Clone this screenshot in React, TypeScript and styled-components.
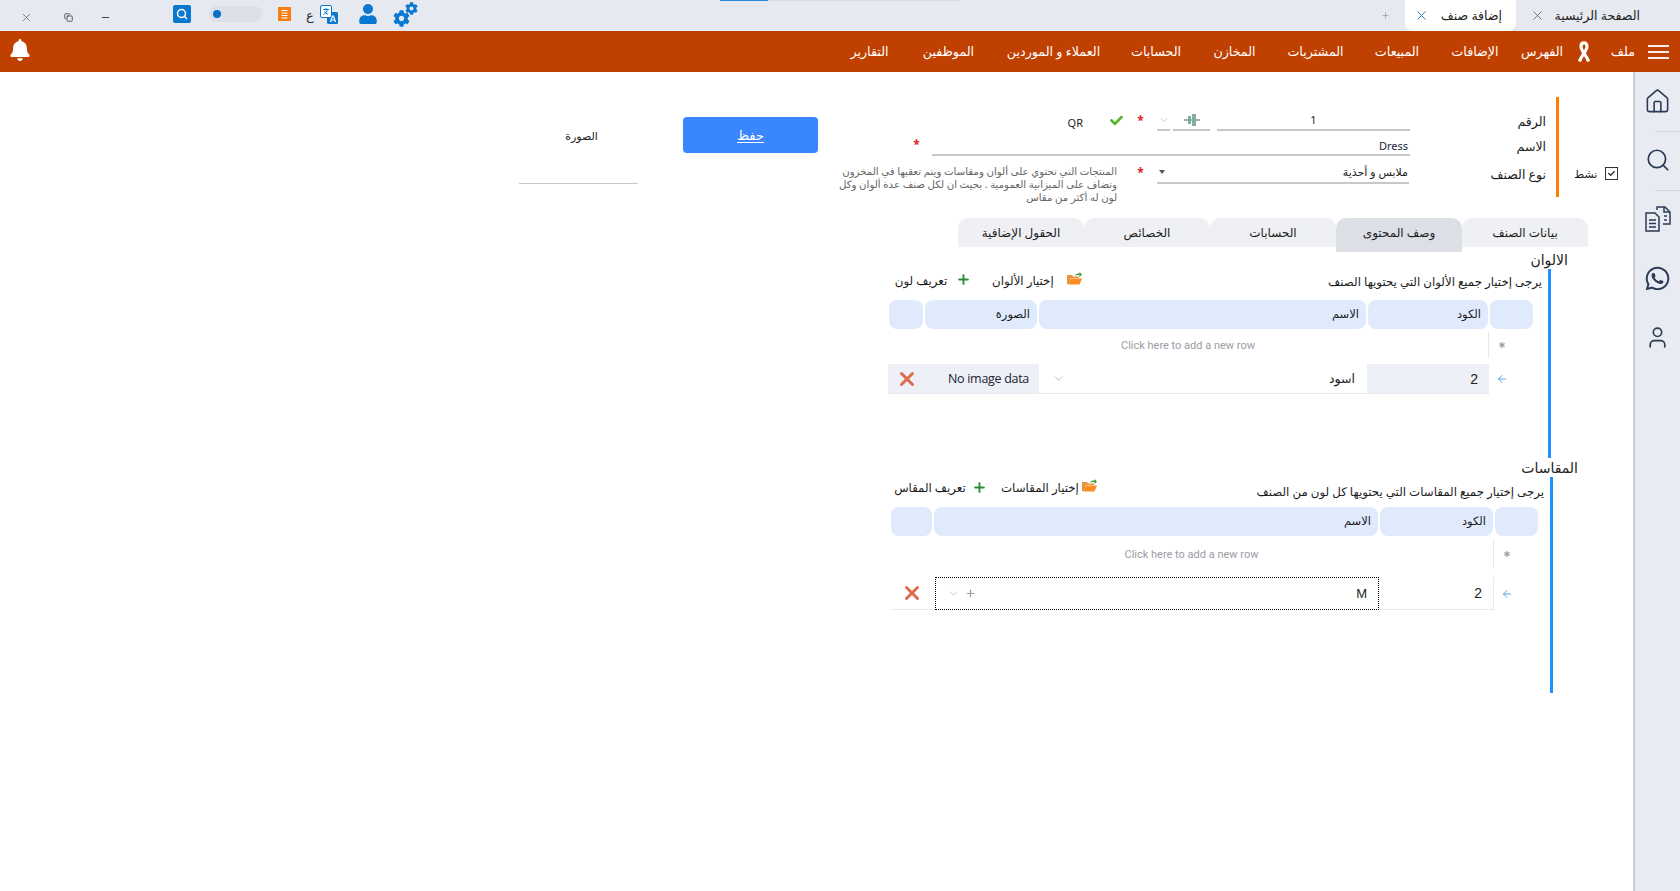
import React from "react";
import styled, { createGlobalStyle } from "styled-components";
import { ArrowLeft, Asterisk, ChevronDown, Copy, House, Minus, Plus, Search, User, X } from "lucide-react";
import { FaBell, FaCheck, FaCog, FaUser, FaWhatsapp } from "react-icons/fa";

const Global = createGlobalStyle`
  html, body { margin: 0; padding: 0; height: 100%; background: #fff; overflow: hidden; }
  #root { height: 100%; }
  * { box-sizing: border-box; }
  body { font-family: "Noto Sans", "Open Sans", "DejaVu Sans", sans-serif; color: #1c1c1c; }
`;

const Page = styled.div`display: flex; flex-direction: column; width: 1680px; height: 891px;`;

const TitleBar = styled.header`display: flex; height: 31px; background: #e6e9ef; flex: none;`;
const WindowControls = styled.div`display: grid; grid-template-columns: 42px 42px 36px; padding-left: 5px; align-items: center; color: #333; width: 125px;`;
const WinBtn = styled.span`display: flex; justify-content: center; align-items: center; padding-top: 4px;`;
const MinBtn = styled(WinBtn)`margin-left: -4px;`;
const Tools = styled.div`display: flex; align-items: center; margin-left: 48px; height: 28px;`;
const SearchTool = styled.span`display: flex; align-items: center; justify-content: center; width: 18px; height: 18px; background: #0a78d0; border-radius: 2px; color: #fff; margin-right: 18px;`;
const Toggle = styled.span`display: flex; align-items: center; width: 53px; height: 16px; background: #dce0e8; border-radius: 8px; padding-left: 4px; margin-right: 16px;`;
const ToggleDot = styled.span`width: 8px; height: 8px; border-radius: 50%; background: #0a70c4;`;
const ListTool = styled.svg`width: 13px; height: 14px; margin-right: 15px;`;
const LangLetter = styled.span`font-size: 13px; width: 9px; margin-right: 5px; color: #333; line-height: 1; padding-top: 2px;`;
const TranslateTool = styled.svg`width: 18px; height: 19px; margin-right: 20px;`;
const PersonTool = styled.span`display: flex; color: #0a78d0; margin-right: 15px; font-size: 20px;`;
const GearTool = styled.span`position: relative; display: block; width: 25px; height: 25px; color: #0a78d0;`;
const BigGear = styled.span`position: absolute; left: 0; bottom: 0; display: flex; font-size: 17px;`;
const SmallGear = styled.span`position: absolute; right: 0; top: 0; display: flex; font-size: 13px;`;
const LoadStrip = styled.div`display: flex; margin-left: 302px; width: 240px; height: 1px;`;
const LoadDone = styled.span`width: 48px; background: #2b8ae6;`;
const LoadRest = styled.span`flex: 1; background: #dcdcdc;`;
const TabStrip = styled.div`display: flex; margin-left: auto; align-items: stretch;`;
const NewTab = styled.span`display: flex; align-items: center; color: #888; margin-right: 15px;`;
const WindowTab = styled.div<{ $active?: boolean }>`
  display: flex; align-items: center; height: 31px;
  width: ${(p) => (p.$active ? 111 : 164)}px;
  padding: ${(p) => (p.$active ? "0 14px 0 9px" : "0 40px 0 14px")};
  justify-content: space-between;
  background: ${(p) => (p.$active ? "#fff" : "#e6e9ef")};
  border-radius: 0 0 8px 8px;
  font-size: 12.5px; color: #222; white-space: nowrap;
`;
const TabClose = styled.span<{ $active?: boolean }>`display: flex; color: ${(p) => (p.$active ? "#1278d0" : "#555")};`;

const MenuBar = styled.nav`display: flex; align-items: center; height: 41px; background: #bf4000; padding: 0 11px 0 9px; color: #fff; flex: none;`;
const Bell = styled.span`display: flex; font-size: 22px; margin-right: auto; padding-bottom: 3px;`;
const MenuItem = styled.span<{ $w: number }>`width: ${(p) => p.$w}px; text-align: center; font-size: 12.7px; white-space: nowrap; padding-bottom: 1px;`;
const Ribbon = styled.svg`width: 16px; height: 22px; margin: 0 18px 0 6px;`;
const FileItem = styled.span`font-size: 12.7px; margin-right: 13px; padding-bottom: 1px; width: 25px; text-align: right; white-space: nowrap;`;
const Burger = styled.span`display: flex; flex-direction: column; gap: 4px; width: 21px;`;
const BurgerLine = styled.span`height: 2px; background: #fff; opacity: .9;`;

const Body = styled.div`display: flex; flex: 1; min-height: 0;`;
const Content = styled.main`flex: 1; min-width: 0;`;
const Sidebar = styled.aside`width: 47px; flex: none; background: #e8ebf1; border-left: 2px solid #c9ccd3; color: #2b3a55; display: flex; flex-direction: column; align-items: center; padding-top: 15px;`;
const SideIcon = styled.span`display: flex; height: 28px; align-items: center; justify-content: center;`;
const SideRule = styled.span`align-self: flex-end; width: 25px; height: 1px; background: #d5d8df; margin: 16px 0 14px;`;
const SideGap = styled.span`height: 31px;`;

const TopRow = styled.section`display: flex; align-items: flex-start; padding-left: 519px; height: 112px; margin-top: 24px;`;
const PictureBlock = styled.div`width: 119px; height: 88px; padding: 32px 0 0 6px; text-align: center; font-size: 11px; border-bottom: 1px solid #c5c9d2;`;
const SaveButton = styled.button`
  margin: 21px 0 0 45px; width: 135px; height: 36px; border: 0; border-radius: 4px; background: #3a86ff;
  color: #fff; font: inherit; font-size: 13px; text-decoration: underline; text-underline-offset: 2px;
`;
const FormBlock = styled.div`margin-left: 14px; width: 714px; flex: none;`;
const FormRow = styled.div<{ $h: number; $mt?: number }>`display: grid; grid-template-columns: 578px 136px; height: ${(p) => p.$h}px; margin-top: ${(p) => p.$mt || 0}px;`;
const FieldLine = styled.div<{ $top?: boolean }>`display: flex; justify-content: flex-end; align-items: ${(p) => (p.$top ? "flex-start" : "flex-end")};`;
const Label = styled.label<{ $pt: number }>`text-align: right; font-size: 12.5px; padding-top: ${(p) => p.$pt}px; white-space: nowrap;`;
const UnderInput = styled.div<{ $w: number; $center?: boolean }>`
  width: ${(p) => p.$w}px; height: 100%; border-bottom: 2px solid #c8c8c8; display: flex; align-items: center;
  justify-content: ${(p) => (p.$center ? "center" : "flex-end")};
  font-size: 11px; padding: ${(p) => (p.$center ? "0 2px" : "5px 2px 0")}; color: #1c1c3a; white-space: nowrap;
`;
const CodeBox = styled.div`width: 37px; height: 100%; margin-right: 7px; border-bottom: 2px solid #c8c8c8; display: flex; align-items: center; justify-content: center;`;
const ChevBox = styled.div`width: 13px; height: 100%; margin-right: 3px; border-bottom: 2px solid #c8c8c8; display: flex; align-items: center; justify-content: center; color: #999;`;
const Req = styled.span<{ $gap: number; $y?: number }>`width: 9px; margin-right: ${(p) => p.$gap}px; margin-top: ${(p) => p.$y || 0}px; color: #d8202a; font-size: 12px; font-weight: 700; line-height: 1; text-align: center; align-self: center;`;
const SelectReq = styled(Req)`align-self: flex-start;`;
const GreenCheck = styled.span`display: flex; color: #58b428; font-size: 13px; margin-right: 13px; align-self: center;`;
const QR = styled.span`font-size: 11px; margin-right: 27px; align-self: center; padding-top: 3px;`;
const Description = styled.p`margin: 7px 19px 0 0; width: 285px; font-size: 10.2px; line-height: 13px; color: #666; text-align: right; direction: rtl;`;
const SelectCaret = styled.span`width: 0; height: 0; border: 3px solid transparent; border-top: 4px solid #555; border-bottom: 0; margin-right: auto;`;
const SelectBox = styled.div`width: 252px; height: 26px; border-bottom: 2px solid #c8c8c8; display: flex; align-items: center; justify-content: flex-end; font-size: 11px; padding: 3px 1px 0 2px; margin-right: 1px;`;
const OrangeBar = styled.div`margin: 1px 0 0 10px; width: 3px; height: 100px; background: #ff8000; flex: none;`;
const ActiveBlock = styled.div`margin: 70px 0 0 15px; display: flex; align-items: center; gap: 8px; font-size: 11px;`;
const CheckBox = styled.span`display: flex; align-items: center; justify-content: center; width: 13px; height: 13px; border: 1px solid #333; color: #333;`;

const TabRow = styled.div`display: flex; align-items: flex-start; padding-left: 958px; height: 32px; margin-top: 10px;`;
const FormTab = styled.div<{ $active?: boolean }>`
  width: 126px; height: ${(p) => (p.$active ? 34 : 29)}px; position: relative; z-index: 1;
  background: ${(p) => (p.$active ? "#dcdfe5" : "#eef0f3")}; border-radius: 10px 10px 0 0;
  display: flex; justify-content: center; align-items: flex-start; padding-top: 6px; font-size: 12px; white-space: nowrap;
`;

const Section = styled.section<{ $left: number; $width: number }>`margin-left: ${(p) => p.$left}px; width: ${(p) => p.$width}px;`;
const SectionTitle = styled.h3`margin: 0; height: 19px; text-align: right; font-size: 14px; font-weight: 400; line-height: 19px; color: #222; white-space: nowrap;`;
const SectionBody = styled.div<{ $h: number; $right: number }>`height: ${(p) => p.$h}px; margin-right: ${(p) => p.$right}px; border-right: 3px solid #1e90ff;`;
const Toolbar = styled.div<{ $h: number }>`display: flex; align-items: center; height: ${(p) => p.$h}px; padding: 0 6px 2px 5px; margin-bottom: 8px;`;
const Action = styled.span<{ $w: number; $ml?: number }>`width: ${(p) => p.$w}px; margin-left: ${(p) => p.$ml || 0}px; font-size: 11.8px; white-space: nowrap; text-align: center; flex: none;`;
const ActionIcon = styled.span<{ $ml: number }>`display: flex; margin-left: ${(p) => p.$ml}px; color: #2e8b2e; flex: none;`;
const Folder = styled.svg<{ $ml: number }>`width: 15px; height: 13px; margin-left: ${(p) => p.$ml}px; margin-top: -3px; flex: none;`;
const ToolbarHint = styled.span<{ $down: number }>`margin-left: auto; font-size: 11.8px; white-space: nowrap; padding-top: ${(p) => p.$down}px;`;

const HeaderRow = styled.div<{ $cols: string; $ml?: number }>`display: grid; grid-template-columns: ${(p) => p.$cols}; gap: 2px; height: 29px; margin-left: ${(p) => p.$ml || 0}px; margin-bottom: 3px;`;
const HeadCell = styled.div`background: #dfeafd; border-radius: 8px; font-size: 11.5px; text-align: right; padding: 6px 7px 0 0; white-space: nowrap;`;
const AddRow = styled.div<{ $h: number; $cols: string; $mb: number }>`display: grid; grid-template-columns: ${(p) => p.$cols}; height: ${(p) => p.$h}px; margin-bottom: ${(p) => p.$mb}px;`;
const AddHint = styled.div`display: flex; align-items: center; justify-content: center; padding-top: 1px; font-family: Roboto, sans-serif; font-size: 11px; color: #9a9ca6; border-right: 1px solid #e6e8ee;`;
const RowMark = styled.div`display: flex; align-items: center; padding-left: 8px; color: #9a9a9a;`;
const DataRow = styled.div<{ $h: number; $cols: string }>`display: grid; grid-template-columns: ${(p) => p.$cols}; height: ${(p) => p.$h}px;`;
const DataCell = styled.div<{ $shade?: boolean; $line?: boolean }>`
  display: flex; align-items: center; justify-content: space-between;
  background: ${(p) => (p.$shade ? "#edf0f7" : "transparent")};
  border-bottom: 1px solid #e9ebf0; ${(p) => p.$line && "border-right: 1px solid #e9ebf0;"}
  padding: 0 10px 0 8px; font-size: 12.5px; white-space: nowrap;
`;
const DeleteCell = styled(DataCell)`padding-left: 11px;`;
const NameCell = styled(DataCell)`padding: 0 12px 0 13px;`;
const NumberValue = styled.span`margin-left: auto; padding-right: 1px; font-family: "Liberation Sans", sans-serif; font-size: 14px; color: #222;`;
const LatinValue = styled.span`font-family: "Open Sans", sans-serif; font-size: 12.5px; letter-spacing: -.3px; color: #223;`;
const DeleteMark = styled.span`display: flex; color: #dd6b4d;`;
const FocusCell = styled.div`display: flex; align-items: center; border: 1px dotted #000; padding: 0 11px 0 11px; color: #999; gap: 5px;`;
const MValue = styled.span`margin-left: auto; font-family: "Liberation Sans", sans-serif; font-size: 13px; color: #222;`;
const ArrowMark = styled.div`display: flex; align-items: center; padding-left: 7px; color: #2a88d8;`;

const FolderIcon = ({ ml }: { ml: number }) => (
  <Folder $ml={ml} viewBox="0 0 15 13">
    <path d="M0 3h5l1 1.500h6V6H4L2 12H0z" fill="#e8943a" />
    <path d="M4 6.500h11l-2.500 6H1.500z" fill="#fb8c22" />
    <path d="M8 3.500c1-2 3-2.500 4.500-1.800V0L15 2.600 12.500 5V3.200C11 2.800 9.500 3 8 3.500z" fill="#3a9a3a" />
  </Folder>
);

const colorsHead = "34px 112px 327px 120px 43px";
const colorsRow = "151px 328px 122px 44px";
const sizesHead = "41px 444px 113px 43px";
const sizesRow = "45px 444px 115px 44px";

const menu: [string, number][] = [
  ["التقارير", 73], ["الموظفين", 85], ["العملاء و الموردين", 125], ["الحسابات", 80], ["المخازن", 77],
  ["المشتريات", 85], ["المبيعات", 78], ["الإضافات", 78], ["الفهرس", 56],
];
const tabs = ["الحقول الإضافية", "الخصائص", "الحسابات", "وصف المحتوى", "بيانات الصنف"];

export default function App() {
  return (
    <Page>
      <Global />
      <TitleBar>
        <WindowControls>
          <WinBtn><X size={13} strokeWidth={1} /></WinBtn>
          <WinBtn><Copy size={9} strokeWidth={2} /></WinBtn>
          <MinBtn><Minus size={11} strokeWidth={2} /></MinBtn>
        </WindowControls>
        <Tools>
          <SearchTool><Search size={12} strokeWidth={3} /></SearchTool>
          <Toggle><ToggleDot /></Toggle>
          <ListTool viewBox="0 0 13 14">
            <rect width="13" height="14" fill="#f57f17" />
            <path d="M3.500 3.500h6M3.500 6h6M3.500 8.500h6M3.500 11h6" stroke="#fff" strokeWidth="1" />
          </ListTool>
          <LangLetter>ع</LangLetter>
          <TranslateTool viewBox="0 0 18 19">
            <rect x="7" y="7" width="11" height="12" rx="1.500" fill="#0a78d0" />
            <rect x="0.500" y="0.500" width="11" height="12" rx="1.500" fill="#fff" stroke="#0a78d0" />
            <path d="M3 4.500h6M6 3v1.500M3.500 9.500c2-1 3.500-2.500 4-5M4.500 6c.8 1.500 2 2.800 3.500 3.500" stroke="#0a78d0" fill="none" strokeWidth="1" />
            <path d="M10.500 17l2-6h1l2 6M11.300 15h3.400" stroke="#fff" fill="none" strokeWidth="1.200" />
          </TranslateTool>
          <PersonTool><FaUser /></PersonTool>
          <GearTool>
            <BigGear><FaCog /></BigGear>
            <SmallGear><FaCog /></SmallGear>
          </GearTool>
        </Tools>
        <LoadStrip><LoadDone /><LoadRest /></LoadStrip>
        <TabStrip>
          <NewTab><Plus size={9} strokeWidth={1.5} /></NewTab>
          <WindowTab $active>
            <TabClose $active><X size={15} strokeWidth={1.5} /></TabClose>
            <span>إضافة صنف</span>
          </WindowTab>
          <WindowTab>
            <TabClose><X size={15} strokeWidth={1.2} /></TabClose>
            <span>الصفحة الرئيسية</span>
          </WindowTab>
        </TabStrip>
      </TitleBar>
      <MenuBar>
        <Bell><FaBell /></Bell>
        {menu.map(([t, w]) => <MenuItem key={t} $w={w}>{t}</MenuItem>)}
        <Ribbon viewBox="0 0 16 22">
          <path d="M3.500 20.500C5 15 11 10 11 5.500 11 3 9.700 1.800 8 1.800S5 3 5 5.500C5 10 11 15 12.500 20.500" fill="none" stroke="#fff" strokeWidth="3.200" />
        </Ribbon>
        <FileItem>ملف</FileItem>
        <Burger><BurgerLine /><BurgerLine /><BurgerLine /></Burger>
      </MenuBar>
      <Body>
        <Content>
          <TopRow>
            <PictureBlock>الصورة</PictureBlock>
            <SaveButton>حفظ</SaveButton>
            <FormBlock>
              <FormRow $h={21} $mt={14}>
                <FieldLine>
                  <QR>QR</QR>
                  <GreenCheck><FaCheck /></GreenCheck>
                  <Req $gap={12}>*</Req>
                  <ChevBox><ChevronDown size={12} strokeWidth={1} /></ChevBox>
                  <CodeBox>
                    <svg width="16" height="12" viewBox="0 0 16 12"><path d="M0 6h16" stroke="#6f9f8a" strokeWidth="1.500" /><path d="M4 2h3v8H4zM8 0h4v12H8z" fill="#7fae9a" /></svg>
                  </CodeBox>
                  <UnderInput $w={193} $center>1</UnderInput>
                </FieldLine>
                <Label $pt={3}>الرقم</Label>
              </FormRow>
              <FormRow $h={25}>
                <FieldLine>
                  <Req $gap={11} $y={3}>*</Req>
                  <UnderInput $w={478}>Dress</UnderInput>
                </FieldLine>
                <Label $pt={7}>الاسم</Label>
              </FormRow>
              <FormRow $h={50} $mt={2}>
                <FieldLine $top>
                  <Description>المنتجات التي تحتوي على ألوان ومقاسات ويتم تعقبها في المخزون وتضاف على الميزانية العمومية . بحيث ان لكل صنف عدة ألوان وكل لون له أكثر من مقاس</Description>
                  <SelectReq $gap={12} $y={9}>*</SelectReq>
                  <SelectBox><SelectCaret />ملابس و أحذية</SelectBox>
                </FieldLine>
                <Label $pt={8}>نوع الصنف</Label>
              </FormRow>
            </FormBlock>
            <OrangeBar />
            <ActiveBlock>
              <span>نشط</span>
              <CheckBox><FaCheck size={7} /></CheckBox>
            </ActiveBlock>
          </TopRow>

          <TabRow>
            {tabs.map((t) => <FormTab key={t} $active={t === "وصف المحتوى"}>{t}</FormTab>)}
          </TabRow>

          <Section $left={888} $width={680}>
            <SectionTitle>الالوان</SectionTitle>
            <SectionBody $h={189} $right={17}>
              <Toolbar $h={23}>
                <Action $w={54} $ml={1}>تعريف لون</Action>
                <ActionIcon $ml={8}><Plus size={15} strokeWidth={3} /></ActionIcon>
                <Action $w={61} $ml={21}>إختيار الألوان</Action>
                <FolderIcon ml={14} />
                <ToolbarHint $down={2}>يرجى إختيار جميع الألوان التي يحتويها الصنف</ToolbarHint>
              </Toolbar>
              <HeaderRow $cols={colorsHead} $ml={1}>
                <HeadCell />
                <HeadCell>الصورة</HeadCell>
                <HeadCell>الاسم</HeadCell>
                <HeadCell>الكود</HeadCell>
                <HeadCell />
              </HeaderRow>
              <AddRow $h={26} $mb={6} $cols="601px 44px">
                <AddHint>Click here to add a new row</AddHint>
                <RowMark><Asterisk size={10} strokeWidth={3} /></RowMark>
              </AddRow>
              <DataRow $h={30} $cols={colorsRow}>
                <DataCell $shade>
                  <DeleteMark><X size={22} strokeWidth={3.2} /></DeleteMark>
                  <LatinValue>No image data</LatinValue>
                </DataCell>
                <NameCell>
                  <ChevronDown size={13} strokeWidth={1} color="#888" />
                  <span>اسود</span>
                </NameCell>
                <DataCell $shade>
                  <NumberValue>2</NumberValue>
                </DataCell>
                <ArrowMark><ArrowLeft size={12} strokeWidth={1.5} /></ArrowMark>
              </DataRow>
            </SectionBody>
          </Section>

          <Section $left={890} $width={688}>
            <SectionTitle>المقاسات</SectionTitle>
            <SectionBody $h={216} $right={25}>
              <Toolbar $h={22}>
                <Action $w={74} $ml={-2}>تعريف المقاس</Action>
                <ActionIcon $ml={5}><Plus size={15} strokeWidth={3} /></ActionIcon>
                <Action $w={74} $ml={14}>إختيار المقاسات</Action>
                <FolderIcon ml={7} />
                <ToolbarHint $down={8}>يرجى إختيار جميع المقاسات التي يحتويها كل لون من الصنف</ToolbarHint>
              </Toolbar>
              <HeaderRow $cols={sizesHead} $ml={1}>
                <HeadCell />
                <HeadCell>الاسم</HeadCell>
                <HeadCell>الكود</HeadCell>
                <HeadCell />
              </HeaderRow>
              <AddRow $h={30} $mb={8} $cols="604px 44px">
                <AddHint>Click here to add a new row</AddHint>
                <RowMark><Asterisk size={10} strokeWidth={3} /></RowMark>
              </AddRow>
              <DataRow $h={33} $cols={sizesRow}>
                <DeleteCell>
                  <DeleteMark><X size={22} strokeWidth={3.2} /></DeleteMark>
                </DeleteCell>
                <FocusCell>
                  <ChevronDown size={13} strokeWidth={1} />
                  <Plus size={11} strokeWidth={2.5} />
                  <MValue>M</MValue>
                </FocusCell>
                <DataCell $line>
                  <NumberValue>2</NumberValue>
                </DataCell>
                <ArrowMark><ArrowLeft size={12} strokeWidth={1.5} /></ArrowMark>
              </DataRow>
            </SectionBody>
          </Section>
        </Content>
        <Sidebar>
          <SideIcon><House size={27} strokeWidth={1.4} /></SideIcon>
          <SideRule />
          <SideIcon><Search size={26} strokeWidth={1.6} /></SideIcon>
          <SideRule />
          <SideIcon>
            <svg width="26" height="26" viewBox="0 0 26 26" fill="none" stroke="#2b3a55" strokeWidth="1.500">
              <path d="M1 7h9l4 4v14H1z" fill="#e8ebf1" />
              <path d="M4 14h7M4 17.500h7M4 21h7" />
              <path d="M12 4V1h8l5 5v12h-7" />
              <path d="M19 1v5h6M19 10h3M19 14h3" />
            </svg>
          </SideIcon>
          <SideGap />
          <SideIcon><FaWhatsapp size={27} /></SideIcon>
          <SideGap />
          <SideIcon><User size={25} strokeWidth={1.6} /></SideIcon>
        </Sidebar>
      </Body>
    </Page>
  );
}
